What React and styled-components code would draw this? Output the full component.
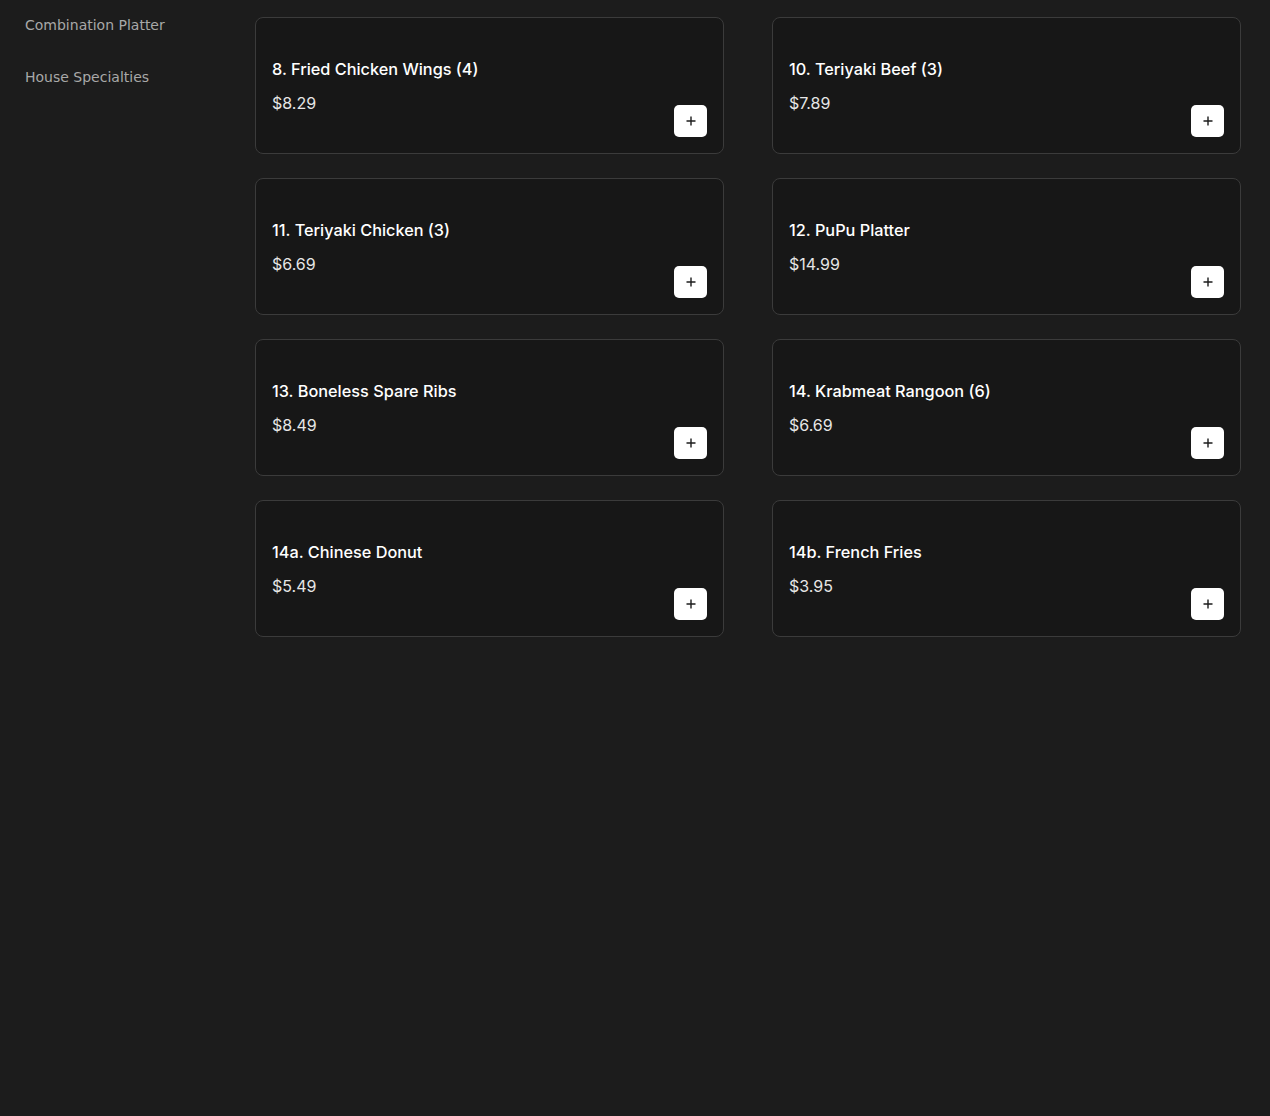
import React from 'react';
import styled, { createGlobalStyle } from 'styled-components';

const GlobalStyle = createGlobalStyle`
  html, body {
    margin: 0;
    background: #1c1c1c;
  }
  body {
    font-family: "DejaVu Sans", sans-serif;
  }
`;

const Page = styled.div`
  display: flex;
  min-height: 1116px;
  background: #1c1c1c;
`;

const Sidebar = styled.nav`
  width: 255px;
  flex-shrink: 0;
  padding: 16px 0 0 25px;
  box-sizing: border-box;
  display: flex;
  flex-direction: column;
  gap: 34px;
`;

const NavItem = styled.a`
  font-family: "DejaVu Sans", sans-serif;
  font-size: 14px;
  line-height: 18px;
  color: #a8a8a8;
  text-decoration: none;
`;

const Grid = styled.main`
  flex: 1;
  min-width: 0;
  display: grid;
  grid-template-columns: 1fr 1fr;
  column-gap: 48px;
  row-gap: 24px;
  align-content: start;
  padding: 17px 29px 0 0;
`;

const Card = styled.div`
  height: 137px;
  box-sizing: border-box;
  background: #171717;
  border: 1px solid #3b3b3b;
  border-radius: 8px;
  padding: 16px;
  display: flex;
  justify-content: space-between;
  align-items: flex-end;
`;

const Info = styled.div`
  align-self: flex-start;
  padding-top: 24px;
  display: flex;
  flex-direction: column;
  gap: 13px;
`;

const Title = styled.h3`
  margin: 0;
  font-family: Inter, "Open Sans", sans-serif;
  font-weight: 500;
  font-size: 16.3px;
  line-height: 22px;
  color: #ffffff;
`;

const Price = styled.span`
  font-family: Inter, "Open Sans", sans-serif;
  font-size: 16px;
  line-height: 20px;
  color: #e6e6e6;
`;

const AddButton = styled.button`
  width: 33px;
  height: 32px;
  border: none;
  border-radius: 5px;
  background: #ffffff;
  display: flex;
  align-items: center;
  justify-content: center;
  padding: 0;
  cursor: pointer;
`;

const items = [
  { name: '8. Fried Chicken Wings (4)', price: '$8.29' },
  { name: '10. Teriyaki Beef (3)', price: '$7.89' },
  { name: '11. Teriyaki Chicken (3)', price: '$6.69' },
  { name: '12. PuPu Platter', price: '$14.99' },
  { name: '13. Boneless Spare Ribs', price: '$8.49' },
  { name: '14. Krabmeat Rangoon (6)', price: '$6.69' },
  { name: '14a. Chinese Donut', price: '$5.49' },
  { name: '14b. French Fries', price: '$3.95' },
];

const PlusIcon = () => (
  <svg width="12" height="12" viewBox="0 0 12 12" fill="none">
    <path d="M6 1.5v9M1.5 6h9" stroke="#1c1c1c" strokeWidth="1.4" />
  </svg>
);

const App = () => (
  <Page>
    <GlobalStyle />
    <Sidebar>
      <NavItem>Combination Platter</NavItem>
      <NavItem>House Specialties</NavItem>
    </Sidebar>
    <Grid>
      {items.map((item) => (
        <Card key={item.name}>
          <Info>
            <Title>{item.name}</Title>
            <Price>{item.price}</Price>
          </Info>
          <AddButton aria-label="Add">
            <PlusIcon />
          </AddButton>
        </Card>
      ))}
    </Grid>
  </Page>
);

export default App;
